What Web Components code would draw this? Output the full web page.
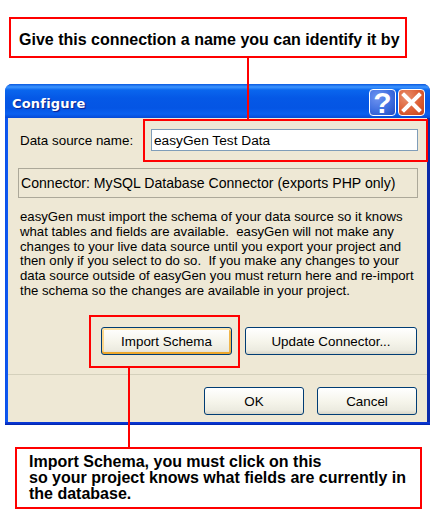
<!DOCTYPE html>
<html>
<head>
<meta charset="utf-8">
<title>Configure</title>
<style>
  html, body { margin: 0; padding: 0; background: #fff; }
  body { width: 442px; height: 528px; position: relative; overflow: hidden; font-family: "Liberation Sans", Arial, sans-serif; }
  note-box[top] { margin: 17px 0 0 9px; width: 398px; height: 41px; }
  note-box[bottom] { margin: 22px 0 0 15px; width: 407px; height: 62px; }
  xp-dialog { margin: 26px 0 0 5px; }
</style>
</head>
<body>
<note-box top><div style="font-size:16px;line-height:18px;padding:12px 0 0 8px;white-space:nowrap">Give this connection a name you can identify it by</div></note-box>

<xp-dialog heading="Configure">
  <config-form></config-form>
</xp-dialog>

<note-box bottom><div style="font-size:16px;line-height:16px;padding:5px 0 0 12px;white-space:nowrap">Import Schema, you must click on this<br>so your project knows what fields are currently in<br>the database.</div></note-box>

<red-mark style="left:143px;top:119px;width:285px;height:43px"></red-mark>
<red-mark style="left:89px;top:315px;width:151px;height:53px"></red-mark>
<red-line style="left:247px;top:58px;height:62px"></red-line>
<red-line style="left:128px;top:368px;height:80px"></red-line>

<script>
class NoteBox extends HTMLElement {
  constructor() {
    super()
    this.attachShadow({mode:'open'}).innerHTML = `
      <style>
        :host {
          display: block;
          box-sizing: border-box;
          border: 2px solid #f00;
          background: #fff;
          color: #000;
          font-weight: bold;
        }
      </style>
      <slot></slot>`
  }
}

class RedMark extends HTMLElement {
  constructor() {
    super()
    this.attachShadow({mode:'open'}).innerHTML = `
      <style>
        :host { display: block; position: absolute; box-sizing: border-box; border: 2px solid #f00; }
      </style>`
  }
}

class RedLine extends HTMLElement {
  constructor() {
    super()
    this.attachShadow({mode:'open'}).innerHTML = `
      <style>
        :host { display: block; position: absolute; width: 2px; background: #f00; }
      </style>`
  }
}

class XpDialog extends HTMLElement {
  constructor() {
    super()
    this.attachShadow({mode:'open'}).innerHTML = `
      <style>
        :host {
          display: flex;
          flex-direction: column;
          box-sizing: border-box;
          width: 425px;
          height: 341px;
          border-radius: 7px 7px 0 0;
          overflow: hidden;
          background: linear-gradient(to right, #0a4fe8 0, #0f5af2 3px, #0a2eb8 3px, #0a2aa8 100%);
        }
        .title {
          height: 34px;
          flex: none;
          display: flex;
          align-items: center;
          gap: 2px;
          padding: 0 5px 0 7px;
          background: linear-gradient(to bottom, #0a5ae0 0, #3d95ff 3px, #0a66ee 6px, #0558e6 14px, #0455e4 24px, #0a60f0 30px, #0549d6 34px);
        }
        .name {
          flex: 1;
          font: bold 13px "DejaVu Sans", sans-serif;
          letter-spacing: 0.2px;
          color: #fff;
          text-shadow: 1px 1px 1px #0f1f8a;
          margin-top: 5px;
        }
        .cap {
          width: 27px;
          height: 27px;
          box-sizing: border-box;
          border: 1px solid #fff;
          border-radius: 4px;
          display: flex;
          align-items: center;
          justify-content: center;
          margin-top: 3px;
        }
        .help {
          background: radial-gradient(circle at 30% 30%, #6f94f0 0, #3f6fe0 55%, #2349c0 100%);
          color: #fff;
          font: bold 30px/25px "Liberation Sans", sans-serif;
        }
        .close { background: radial-gradient(circle at 30% 30%, #e8906f 0, #dd5f35 55%, #c2401a 100%); }
        .body {
          flex: 1;
          background: #eee8d5;
          margin: 0 3px;
          min-height: 0;
        }
        .foot {
          flex: none;
          height: 3px;
          background: linear-gradient(to bottom, #0a3ad8 0, #0630c8 2px, #00209a 3px);
        }
      </style>
      <div class="title">
        <div class="name">${this.getAttribute('heading')}</div>
        <div class="cap help">?</div>
        <div class="cap close">
          <svg width="21" height="21" viewBox="0 0 21 21"><path d="M3 3L18 18M18 3L3 18" stroke="#fff" stroke-width="4" stroke-linecap="square" fill="none"/></svg>
        </div>
      </div>
      <div class="body"><slot></slot></div>
      <div class="foot"></div>`
  }
}

class XpButton extends HTMLElement {
  constructor() {
    super()
    this.attachShadow({mode:'open'}).innerHTML = `
      <style>
        :host {
          display: flex;
          align-items: center;
          justify-content: center;
          box-sizing: border-box;
          height: 28px;
          padding-top: 1px;
          border: 1px solid #003c74;
          border-radius: 3px;
          background: linear-gradient(to bottom, #fff 0, #f5f4ea 55%, #ecebe0 85%, #d8d5c8 100%);
          font-size: 13.4px;
          color: #000;
        }
        :host([focused]) {
          box-shadow: inset 0 2px 0 #fde3a8, inset 0 -2px 0 #eda72c, inset 2px 0 0 #fbd68a, inset -2px 0 0 #f0b64a;
        }
      </style>
      <slot></slot>`
  }
}

class ConfigForm extends HTMLElement {
  constructor() {
    super()
    this.attachShadow({mode:'open'}).innerHTML = `
      <style>
        :host {
          display: flex;
          flex-direction: column;
          height: 100%;
          font: 13.4px "Liberation Sans", sans-serif;
          color: #000;
        }
        .name-row {
          display: flex;
          align-items: center;
          gap: 18px;
          padding: 11px 9px 0 12px;
        }
        .name-row label { white-space: nowrap; width: 113px; }
        .input {
          flex: 1;
          height: 22px;
          box-sizing: border-box;
          border: 1px solid #7f9db9;
          background: #fff;
          padding: 0 2px;
          line-height: 21px;
          font-size: 13.7px;
        }
        .connector {
          margin: 17px 9px 0 10px;
          height: 30px;
          box-sizing: border-box;
          border: 1px solid #aca899;
          padding-left: 2px;
          line-height: 28px;
          white-space: nowrap;
          font-size: 14.1px;
        }
        .info {
          margin: 12px 0 0 12px;
          font-size: 13.2px;
          line-height: 14.8px;
          white-space: pre;
        }
        .pair {
          display: flex;
          gap: 13px;
          margin: 28px 10px 0 93px;
        }
        .pair .wide { width: 172px; }
        .pair .mid { width: 131px; }
        hr {
          margin: 19px 0 0;
          border: 0;
          height: 1px;
          background: #d4d0bc;
        }
        .actions {
          display: flex;
          justify-content: flex-end;
          gap: 13px;
          margin: 12px 10px 0 0;
        }
        .actions xp-button { width: 100px; }
      </style>
      <div class="name-row">
        <label>Data source name:</label>
        <div class="input">easyGen Test Data</div>
      </div>
      <div class="connector">Connector: MySQL Database Connector (exports PHP only)</div>
      <div class="info">easyGen must import the schema of your data source so it knows
what tables and fields are available.  easyGen will not make any
changes to your live data source until you export your project and
then only if you select to do so.  If you make any changes to your
data source outside of easyGen you must return here and re-import
the schema so the changes are available in your project.</div>
      <div class="pair">
        <xp-button class="mid" focused>Import Schema</xp-button>
        <xp-button class="wide">Update Connector...</xp-button>
      </div>
      <hr>
      <div class="actions">
        <xp-button>OK</xp-button>
        <xp-button>Cancel</xp-button>
      </div>`
  }
}

customElements.define('note-box', NoteBox)
customElements.define('red-mark', RedMark)
customElements.define('red-line', RedLine)
customElements.define('xp-button', XpButton)
customElements.define('xp-dialog', XpDialog)
customElements.define('config-form', ConfigForm)
</script>
</body>
</html>
